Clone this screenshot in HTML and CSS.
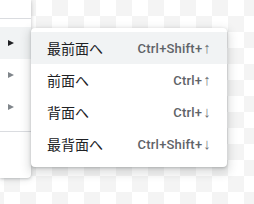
FILE: index.html
```html
<!DOCTYPE html>
<html>
<head>
    <meta charset="utf-8">
    <title>Arrange</title>
    <link rel="stylesheet" href="styles.css">
</head>
<body>

<div class="stage">
    <div class="menu">
        <div class="menu-top"></div>
        <div class="sep"></div>
        <div class="menu-item active"><span class="caret"></span></div>
        <div class="menu-item"><span class="caret"></span></div>
        <div class="menu-item"><span class="caret"></span></div>
        <div class="sep"></div>
        <div class="menu-rest"></div>
    </div>

    <div class="submenu">
        <div class="sub-item hover">
            <span class="label">最前面へ</span>
            <span class="keys">Ctrl+Shift+<span class="arrow">↑</span></span>
        </div>
        <div class="sub-item">
            <span class="label">前面へ</span>
            <span class="keys">Ctrl+<span class="arrow">↑</span></span>
        </div>
        <div class="sub-item">
            <span class="label">背面へ</span>
            <span class="keys">Ctrl+<span class="arrow">↓</span></span>
        </div>
        <div class="sub-item">
            <span class="label">最背面へ</span>
            <span class="keys">Ctrl+Shift+<span class="arrow">↓</span></span>
        </div>
    </div>
</div>

</body>
</html>
```

FILE: styles.css
```css
body {
    margin: 0;
    padding: 0;
    width: 254px;
    height: 204px;
    overflow: hidden;
    font-family: Roboto, "Noto Sans CJK JP", sans-serif;
    background-color: #ffffff;
    background-image: conic-gradient(#f4f4f4 25%, #ffffff 0 50%, #f4f4f4 0 75%, #ffffff 0);
    background-size: 32px 32px;
    background-position: 4px 0;
}

.stage {
    display: flex;
    align-items: flex-start;
}

.menu {
    width: 31px;
    height: 178px;
    background: #ffffff;
    border-bottom-right-radius: 4px;
    box-shadow: 0 1px 3px rgba(60, 64, 67, 0.25), 0 2px 6px rgba(60, 64, 67, 0.12);
    position: relative;
    z-index: 1;
}

.menu-top {
    height: 10px;
}

.sep {
    height: 1px;
    background: #dadce0;
    margin: 8px 0;
}

.menu-item {
    height: 32px;
    display: flex;
    align-items: center;
    padding-left: 8px;
}

.menu-item.active {
    background: #f1f3f4;
}

.caret {
    width: 0;
    height: 0;
    border-top: 3.5px solid transparent;
    border-bottom: 3.5px solid transparent;
    border-left: 6px solid #80868b;
}

.menu-item.active .caret {
    border-left-color: #202124;
}

.submenu {
    width: 196px;
    margin-top: 28px;
    padding: 4px 0 7px;
    background: #ffffff;
    border-radius: 4px;
    box-shadow: 0 1px 3px rgba(60, 64, 67, 0.3), 0 4px 8px 3px rgba(60, 64, 67, 0.15);
    position: relative;
    z-index: 2;
}

.sub-item {
    height: 32px;
    display: flex;
    align-items: center;
    justify-content: space-between;
    padding: 0 16px 0 16px;
}

.sub-item.hover {
    background: #f1f3f4;
}

.label {
    font-family: "Noto Sans CJK JP", sans-serif;
    font-size: 14px;
    color: #202124;
}

.keys {
    font-size: 13px;
    font-weight: 500;
    color: #5f6368;
    letter-spacing: 0.2px;
}

.arrow {
    font-family: "Liberation Sans", sans-serif;
    font-weight: 400;
    font-size: 15px;
    line-height: 1;
    color: #6f7378;
    margin-left: 1px;
}
```
